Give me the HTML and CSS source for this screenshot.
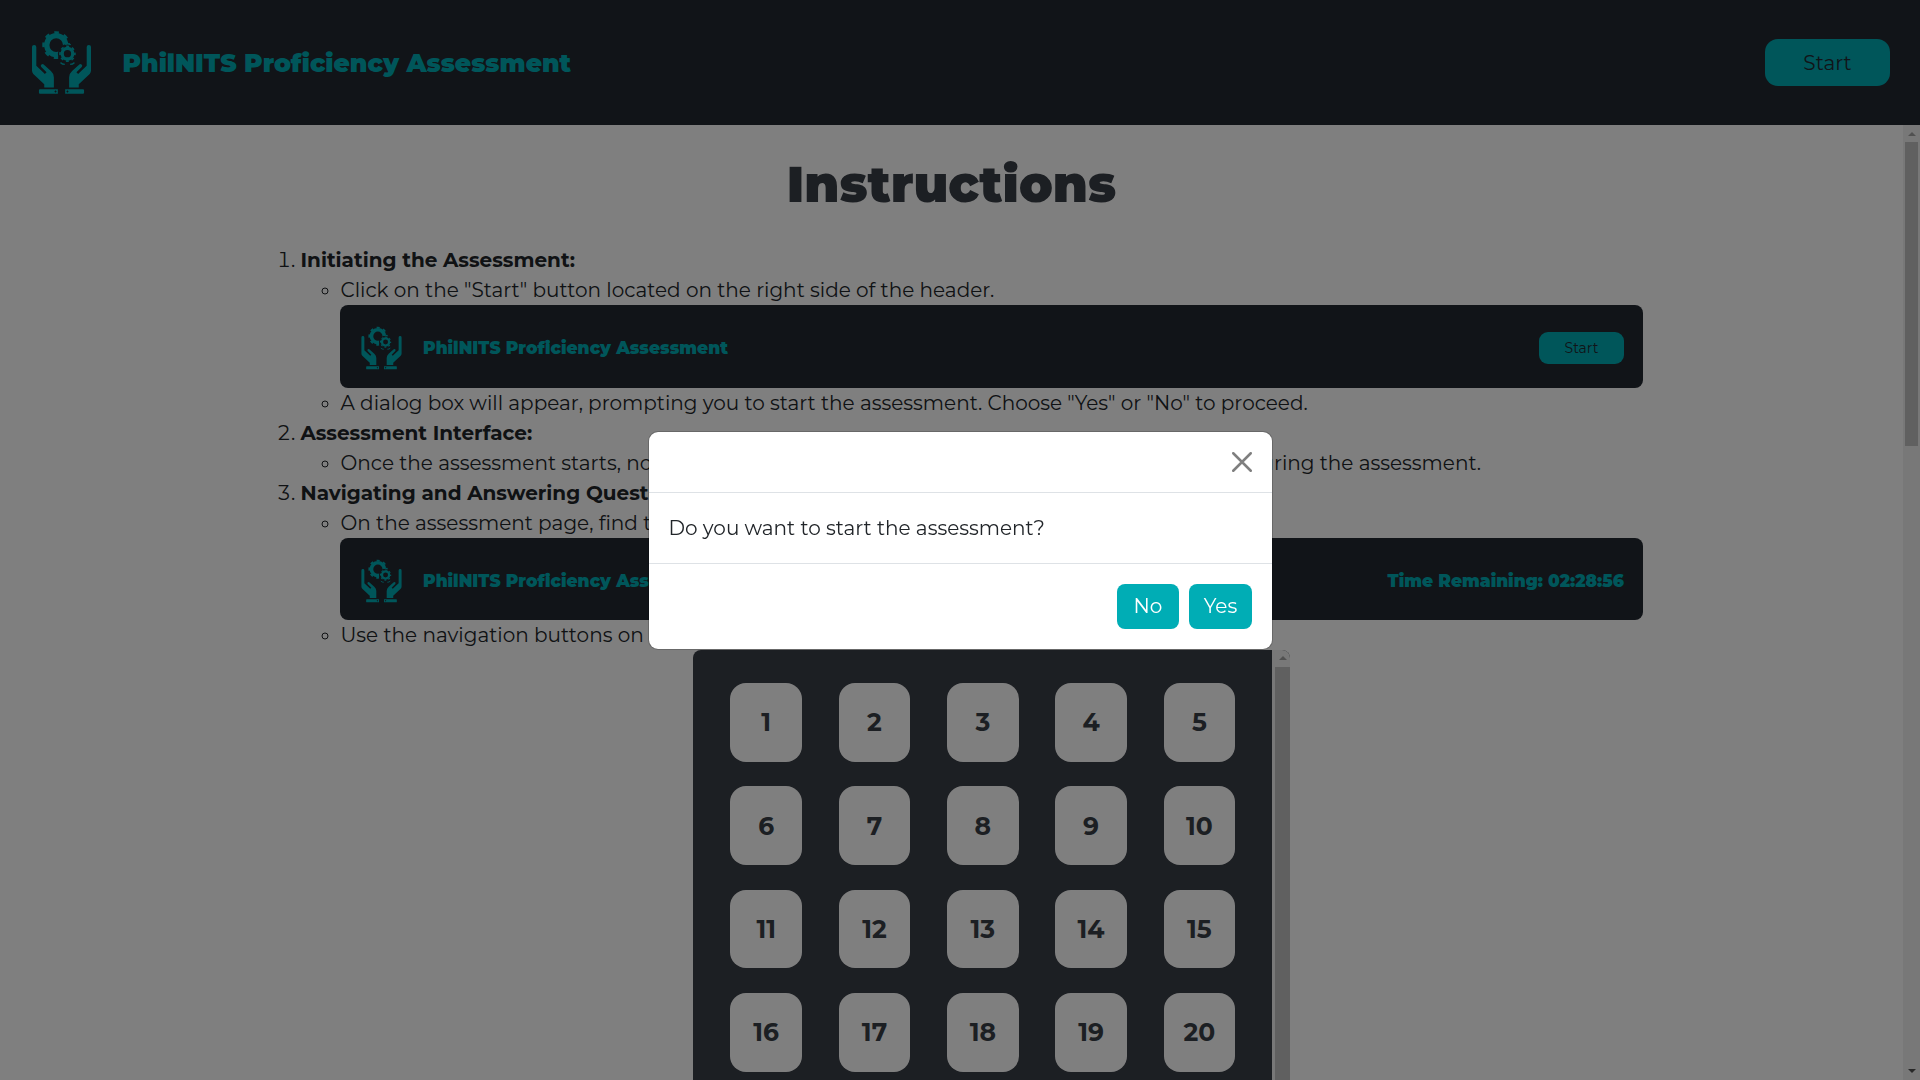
FILE: index.html
```html
<!DOCTYPE html>
<html lang="en">
<head>
<meta charset="utf-8">
<title>PhilNITS Proficiency Assessment</title>
<link rel="stylesheet" href="styles.css">
</head>
<body>
<svg class="defs" aria-hidden="true">
  <defs>
    <mask id="cut" maskUnits="userSpaceOnUse" x="30" y="20" width="190" height="210">
      <rect x="30" y="20" width="190" height="210" fill="#fff"/>
      <circle cx="143" cy="101" r="29" fill="#000"/>
      <path d="M116 100h30v30h-30z" fill="#000"/>
    </mask>
    <g id="hand">
      <path d="M36 81a6.5 6.5 0 0 1 13 0V137L75 162L80 157L64 141a5 5 0 0 1 8 -7L93 153Q102 161 102 172V203H73V193L40 162Q36 158 36 152Z"/>
      <path fill-rule="evenodd" d="M60 208H114V222H60Q57 222 57 219V211Q57 208 60 208ZM107 211.5l-3.5 3.5l3.5 3.5l3.5 -3.5Z"/>
    </g>
  </defs>
  <symbol id="logo" viewBox="30 30 190 195">
    <g fill="none" stroke="currentColor">
      <g mask="url(#cut)">
        <circle cx="109" cy="75" r="28.5" stroke-width="16"/>
        <circle cx="109" cy="75" r="38.5" stroke-width="7" stroke-dasharray="14 16.24" stroke-dashoffset="7"/>
      </g>
      <circle cx="143" cy="101" r="16" stroke-width="10"/>
      <circle cx="143" cy="101" r="22.5" stroke-width="5" stroke-dasharray="9 8.67" stroke-dashoffset="4.5"/>
      <path d="M136 73q8 -4 17 1M122 128l6 4l7 1M164 128l-6 4l-7 1" stroke-width="4"/>
    </g>
    <g fill="currentColor">
      <use href="#hand"/>
      <use href="#hand" transform="translate(250 0) scale(-1 1)"/>
    </g>
  </symbol>
</svg>

<header class="header">
  <svg class="header-logo"><use href="#logo"/></svg>
  <span class="header-title">PhilNITS Proficiency Assessment</span>
  <button class="start">Start</button>
</header>

<div class="page">
  <main class="content">
    <h1>Instructions</h1>
    <ol>
      <li><strong>Initiating the Assessment:</strong>
        <ul>
          <li>Click on the "Start" button located on the right side of the header.
            <div class="banner">
              <svg class="banner-logo"><use href="#logo"/></svg>
              <span class="banner-title">PhilNITS Proficiency Assessment</span>
              <span class="banner-start">Start</span>
            </div>
          </li>
          <li>A dialog box will appear, prompting you to start the assessment. Choose "Yes" or "No" to proceed.</li>
        </ul>
      </li>
      <li><strong>Assessment Interface:</strong>
        <ul>
          <li><div class="split"><span>Once the assessment starts, no</span><span>pausing during the assessment.</span></div></li>
        </ul>
      </li>
      <li><strong>Navigating and Answering Questions:</strong>
        <ul>
          <li>On the assessment page, find the
            <div class="banner banner-timer">
              <svg class="banner-logo"><use href="#logo"/></svg>
              <span class="banner-title">PhilNITS Proficiency Assessment</span>
              <span class="timer">Time Remaining: 02:28:56</span>
            </div>
          </li>
          <li>Use the navigation buttons on
            <div class="panel">
              <div class="numbers">
                <span>1</span><span>2</span><span>3</span><span>4</span><span>5</span>
                <span>6</span><span>7</span><span>8</span><span>9</span><span>10</span>
                <span>11</span><span>12</span><span>13</span><span>14</span><span>15</span>
                <span>16</span><span>17</span><span>18</span><span>19</span><span>20</span>
              </div>
              <div class="panel-bar"><i class="up"></i><i class="thumb"></i></div>
            </div>
          </li>
        </ul>
      </li>
    </ol>
  </main>
  <div class="page-bar"><i class="up"></i><i class="thumb"></i><i class="down"></i></div>
</div>

<div class="backdrop">
  <div class="modal" role="dialog">
    <div class="modal-head">
      <svg class="close" viewBox="0 0 16 16"><path d="M1 1L15 15M15 1L1 15"/></svg>
    </div>
    <div class="modal-body">Do you want to start the assessment?</div>
    <div class="modal-foot"><button>No</button><button>Yes</button></div>
  </div>
</div>
</body>
</html>
```
FILE: styles.css
```css
* { box-sizing: border-box; }
html, body { height: 100%; margin: 0; overflow: hidden; }
body {
  display: flex;
  flex-direction: column;
  background: #fff;
  color: #212529;
  font: 400 20px/30px Montserrat, Inter, sans-serif;
}
button { font: inherit; border: 0; }
.defs { position: absolute; width: 0; height: 0; }

.header {
  flex: none;
  display: flex;
  align-items: center;
  height: 125px;
  padding: 0 30px;
  background: #222831;
  color: #00adb5;
}
.header-logo { width: 63px; height: 65px; }
.header-title { margin-left: 29.5px; font-size: 25px; font-weight: 900; }
.start {
  width: 125px;
  height: 47px;
  margin-left: auto;
  border-radius: 13px;
  background: #00adb5;
  color: #222831;
}

.page { flex: 1; min-height: 0; display: flex; }
.content { flex: 1; overflow: hidden; padding: 30px 260px 0; }
h1 {
  margin: 0 0 30px;
  color: #393e46;
  font-size: 50px;
  font-weight: 900;
  line-height: 60px;
  text-align: center;
}
ol, ul { margin: 0; padding-left: 40px; }
ol { padding-left: 40.5px; }
ul { padding-left: 40px; }
strong { font-weight: 700; }
.split { display: flex; justify-content: space-between; width: 1140.5px; }

.banner {
  display: flex;
  align-items: center;
  height: 83px;
  padding: 2px 19px 0 20px;
  margin-left: -0.5px;
  border-radius: 8px;
  background: #222831;
  color: #00adb5;
}
.banner-timer { height: 82px; padding-top: 4px; }
.banner-logo { width: 43px; height: 44px; }
.banner-title { margin-left: 20px; font-size: 17px; font-weight: 900; }
.timer { margin-left: auto; font-size: 17px; font-weight: 900; }
.banner-start {
  width: 85px;
  height: 32px;
  margin-left: auto;
  border-radius: 9px;
  background: #00adb5;
  color: #222831;
  font-size: 14px;
  line-height: 33px;
  text-align: center;
}

.panel {
  display: flex;
  width: 597px;
  height: 600px;
  margin: 0 auto;
  border-radius: 8px;
  overflow: hidden;
  background: #393e46;
}
.numbers {
  flex: 1;
  display: grid;
  grid-template-columns: repeat(5, 71.5px);
  grid-auto-rows: 78.5px;
  gap: 24.8px 36.8px;
  align-content: start;
  padding: 33.2px 0 0 37.2px;
}
.numbers span {
  display: flex;
  align-items: center;
  justify-content: center;
  border-radius: 16px;
  background: #fff;
  color: #393e46;
  font-size: 25px;
  font-weight: 700;
}

.panel-bar, .page-bar {
  flex: none;
  display: flex;
  flex-direction: column;
  align-items: center;
  width: 17px;
  background: #f1f1f1;
}
.panel-bar { width: 18px; padding-left: 3px; }
.up, .down {
  width: 0;
  height: 0;
  border: 4px solid transparent;
}
.up { margin: 3px 0 6px; border-bottom-color: #a3a3a3; }
.panel-bar .up { margin: 2px 0 7px; }
.thumb { width: 13px; height: 304px; background: #c1c1c1; }
.panel-bar .thumb { width: 15px; height: 583px; }
.down { margin: auto 0 3px; border-top-color: #505050; }

.backdrop {
  position: fixed;
  inset: 0;
  display: flex;
  align-items: center;
  justify-content: center;
  background: rgba(0, 0, 0, .5);
}
.modal {
  width: 625px;
  border: 1px solid rgba(0, 0, 0, .18);
  border-radius: 10px;
  background: #fff;
  background-clip: padding-box;
}
.modal-head {
  display: flex;
  align-items: center;
  justify-content: flex-end;
  height: 61px;
  padding: 0 20px;
  border-bottom: 1px solid #dee2e6;
}
.close {
  width: 20px;
  height: 20px;
  fill: none;
  stroke: #7f7f7f;
  stroke-width: 2;
  stroke-linecap: round;
}
.modal-body { padding: 20px; }
.modal-foot {
  display: flex;
  justify-content: flex-end;
  gap: 10px;
  padding: 20px;
  border-top: 1px solid #dee2e6;
}
.modal-foot button {
  width: 63px;
  height: 45px;
  padding: 0 0 0 1px;
  border-radius: 8px;
  background: #00adb5;
  color: #fff;
}
.modal-foot button:first-child { width: 62px; }
```
